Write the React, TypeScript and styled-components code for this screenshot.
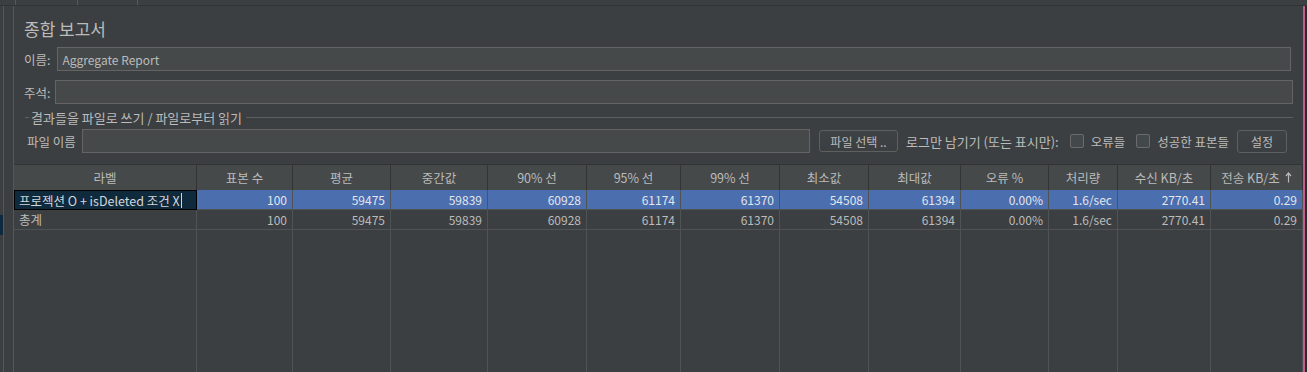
import React from 'react';
import styled, {createGlobalStyle} from 'styled-components';

const GlobalStyle = createGlobalStyle`
  html, body {
    margin: 0;
    padding: 0;
    background: #3c3f41;
  }
  body {
    font-family: "Noto Sans CJK KR", "Noto Sans", sans-serif;
    font-size: 12px;
    color: #bbbbbb;
  }
`;

const COLUMNS = [
    {title: '라벨', width: 183},
    {title: '표본 수', width: 96},
    {title: '평균', width: 98},
    {title: '중간값', width: 97},
    {title: '90% 선', width: 99},
    {title: '95% 선', width: 94},
    {title: '99% 선', width: 99},
    {title: '최소값', width: 89},
    {title: '최대값', width: 92},
    {title: '오류 %', width: 88},
    {title: '처리량', width: 69},
    {title: '수신 KB/초', width: 93},
    {title: '전송 KB/초', width: 92, sorted: true},
];

const TEMPLATE = COLUMNS.map(c => `${c.width}px`).join(' ');

const VALUES = ['100', '59475', '59839', '60928', '61174', '61370', '54508', '61394', '0.00%', '1.6/sec', '2770.41', '0.29'];

const SortArrow = () => (
    <svg width="7" height="11" viewBox="0 0 7 11">
        <path d="M3.5 1 L3.5 10.5" stroke="#bbbbbb" strokeWidth="1.2"/>
        <path d="M1 4 L3.5 1 L6 4" stroke="#bbbbbb" strokeWidth="1.2" fill="none"/>
    </svg>
);

export default function App(): JSX.Element {
    return (
        <>
            <GlobalStyle/>
            <Page>
                <TopBar>
                    <Tab $width={16}/>
                    <Tab $width={62}/>
                    <Tab $width={60}/>
                </TopBar>
                <Body>
                    <Gutter>
                        <TreeSelection/>
                    </Gutter>
                    <Panel>
                        <Form>
                            <Title>종합 보고서</Title>
                            <FieldRow $top={8} $gap={7} $right={2}>
                                <Label $size={12.5}>이름:</Label>
                                <TextInput defaultValue="Aggregate Report"/>
                            </FieldRow>
                            <FieldRow $top={9} $gap={5} $right={0}>
                                <Label $size={12.5}>주석:</Label>
                                <TextInput/>
                            </FieldRow>
                            <Legend>
                                <LegendTick/>
                                <LegendText>결과들을 파일로 쓰기 / 파일로부터 읽기</LegendText>
                                <LegendLine/>
                            </Legend>
                            <FileRow>
                                <FileLabel $size={12.5}>파일 이름</FileLabel>
                                <TextInput/>
                                <Button $width={79} $height={22}>파일 선택 ..</Button>
                                <Label $size={13}>로그만 남기기 (또는 표시만):</Label>
                                <CheckItem>
                                    <CheckBox/>
                                    <span>오류들</span>
                                </CheckItem>
                                <CheckItem>
                                    <CheckBox/>
                                    <span>성공한 표본들</span>
                                </CheckItem>
                                <Button $width={50} $height={23}>설정</Button>
                            </FileRow>
                        </Form>
                        <Table>
                            <HeaderRow>
                                {COLUMNS.map(c => (
                                    <HeaderCell key={c.title}>
                                        {c.title}
                                        {c.sorted && <SortArrow/>}
                                    </HeaderCell>
                                ))}
                            </HeaderRow>
                            <Row $selected>
                                <EditCell>
                                    프로젝션 O + isDeleted 조건 X<Caret/>
                                </EditCell>
                                {VALUES.map((v, i) => <Cell key={i} $selected>{v}</Cell>)}
                            </Row>
                            <Row>
                                <LabelCell>총계</LabelCell>
                                {VALUES.map((v, i) => <Cell key={i}>{v}</Cell>)}
                            </Row>
                            <Filler>
                                {COLUMNS.map(c => <FillerCell key={c.title}/>)}
                            </Filler>
                        </Table>
                    </Panel>
                    <RightEdge/>
                </Body>
            </Page>
        </>
    );
}

const Page = styled.div`
  width: 1307px;
  height: 372px;
  display: flex;
  flex-direction: column;
  background: #3c3f41;
  overflow: hidden;
`;

const TopBar = styled.div`
  height: 5px;
  display: flex;
  border-bottom: 1px solid #313335;
  flex: 0 0 auto;
`;

const Tab = styled.div<{ $width: number }>`
  width: ${p => p.$width}px;
  border-right: 1px solid #55585a;
  box-sizing: border-box;
`;

const Body = styled.div`
  flex: 1;
  display: flex;
  min-height: 0;
`;

const Gutter = styled.div`
  width: 14px;
  flex: 0 0 auto;
  box-sizing: border-box;
  border-right: 1px solid #55585a;
  display: flex;
  flex-direction: column;
  background: linear-gradient(to right, #3c3f41 0 3px, #55585a 3px 4px, #3c3f41 4px);
`;

const TreeSelection = styled.div`
  margin-top: 209px;
  width: 3px;
  height: 20px;
  background: #0d293e;
`;

const Panel = styled.div`
  flex: 1;
  display: flex;
  flex-direction: column;
  min-width: 0;
`;

const Form = styled.div`
  padding: 0 10px 0 10px;
  display: flex;
  flex-direction: column;
`;

const Title = styled.div`
  margin-top: 12px;
  height: 21px;
  line-height: 21px;
  font-size: 17px;
  color: #bbbbbb;
`;

const FieldRow = styled.div<{ $top: number; $gap: number; $right: number }>`
  margin-top: ${p => p.$top}px;
  margin-right: ${p => p.$right}px;
  height: 24px;
  display: flex;
  align-items: center;
  gap: ${p => p.$gap}px;
`;

const Label = styled.span<{ $size: number }>`
  font-size: ${p => p.$size}px;
  color: #bbbbbb;
  white-space: nowrap;
`;

const FileLabel = styled(Label)`
  margin-left: 3px;
  margin-right: -2px;
`;

const TextInput = styled.input`
  flex: 1;
  min-width: 0;
  height: 24px;
  box-sizing: border-box;
  padding: 0 4px;
  background: #45494a;
  border: 1px solid #646464;
  color: #bbbbbb;
  font-family: "Noto Sans CJK KR", "Noto Sans", sans-serif;
  font-size: 12px;
  outline: none;
`;

const Legend = styled.div`
  margin-top: 6px;
  height: 14px;
  display: flex;
  align-items: center;
`;

const LegendTick = styled.div`
  width: 4px;
  height: 1px;
  margin-left: 1px;
  background: #5e6060;
`;

const LegendText = styled.span`
  margin: 0 4px 0 2px;
  font-size: 13px;
  color: #bbbbbb;
  white-space: nowrap;
`;

const LegendLine = styled.div`
  flex: 1;
  height: 1px;
  background: #5e6060;
`;

const FileRow = styled.div`
  margin-top: 5px;
  height: 24px;
  display: flex;
  align-items: center;
  gap: 8px;
  padding-right: 6px;

  & > ${TextInput} {
    margin-right: 1px;
  }
`;

const Button = styled.button<{ $width: number; $height: number }>`
  width: ${p => p.$width}px;
  height: ${p => p.$height}px;
  flex: 0 0 auto;
  padding: 0;
  box-sizing: border-box;
  background: linear-gradient(#3f4244, #3c3f41);
  border: 1px solid #5e6060;
  border-radius: 3px;
  color: #bbbbbb;
  font-family: "Noto Sans CJK KR", "Noto Sans", sans-serif;
  font-size: 12px;
`;

const CheckItem = styled.label`
  display: flex;
  align-items: center;
  gap: 7px;
  margin-left: 3px;
  font-size: 12.5px;
  color: #bbbbbb;
  white-space: nowrap;
`;

const CheckBox = styled.span`
  width: 14px;
  height: 14px;
  box-sizing: border-box;
  border: 1px solid #6b6b6b;
  border-radius: 2px;
  background: #43494a;
`;

const Table = styled.div`
  margin-top: 11px;
  flex: 1;
  display: flex;
  flex-direction: column;
  min-height: 0;
`;

const HeaderRow = styled.div`
  display: grid;
  grid-template-columns: ${TEMPLATE};
  height: 26px;
  background: #45494a;
  border-top: 1px solid #323435;
  box-sizing: border-box;
`;

const HeaderCell = styled.div`
  display: flex;
  align-items: center;
  justify-content: center;
  gap: 5px;
  border-right: 1px solid #323435;
  color: #bbbbbb;
  font-size: 12.5px;
  white-space: nowrap;
`;

const Row = styled.div<{ $selected?: boolean }>`
  display: grid;
  grid-template-columns: ${TEMPLATE};
  height: 20px;
  background: ${p => (p.$selected ? '#4b6eaf' : '#3c3f41')};
  border-bottom: 1px solid #505354;
  box-sizing: border-box;
`;

const Cell = styled.div<{ $selected?: boolean }>`
  display: flex;
  align-items: center;
  justify-content: flex-end;
  padding-right: 5px;
  border-right: 1px solid #505354;
  color: ${p => (p.$selected ? '#e4e6eb' : '#bbbbbb')};
  font-size: 12px;
  white-space: nowrap;
  overflow: hidden;
`;

const LabelCell = styled(Cell)`
  justify-content: flex-start;
  padding: 0 0 0 5px;
  font-size: 12.5px;
`;

const EditCell = styled.div`
  display: flex;
  align-items: center;
  padding-left: 4px;
  margin-bottom: -1px;
  background: #0f2a3d;
  border: 1px solid #000000;
  color: #d4d6da;
  font-size: 12.5px;
  white-space: nowrap;
  overflow: hidden;
`;

const Caret = styled.span`
  width: 1px;
  height: 15px;
  margin-left: 1px;
  background: #d4d6da;
`;

const Filler = styled.div`
  flex: 1;
  display: grid;
  grid-template-columns: ${TEMPLATE};
`;

const FillerCell = styled.div`
  border-right: 1px solid #505354;
`;

const RightEdge = styled.div`
  width: 4px;
  flex: 0 0 auto;
  background: linear-gradient(to right, #c75b8c 0 2px, #2b2b2b 2px);
`;
